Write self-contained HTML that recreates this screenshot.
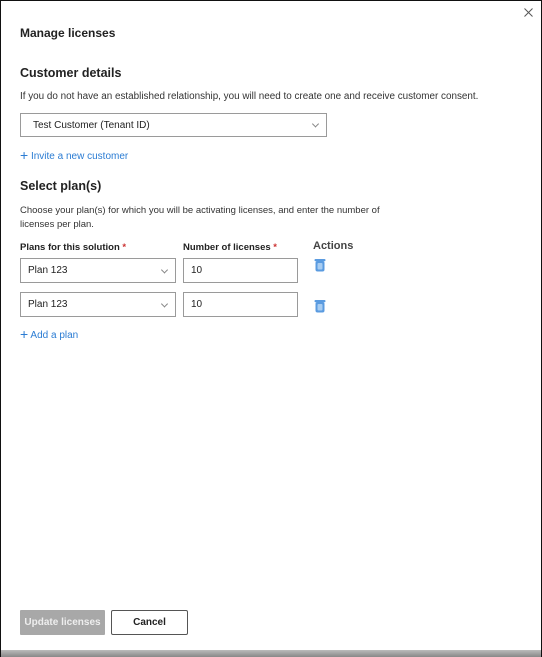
<!DOCTYPE html>
<html><head><style>
*{margin:0;padding:0;box-sizing:border-box}
body{width:542px;height:657px;background:#fff;font-family:"Liberation Sans",sans-serif;color:#222;position:relative;overflow:hidden}
.frame{position:absolute;left:0;top:0;width:542px;height:657px;border:1px solid #111;border-bottom:none}
.bar{position:absolute;left:1px;right:1px;top:650px;height:7px;background:linear-gradient(#bbb,#888)}
.a{position:absolute;white-space:nowrap}
.box{position:absolute;border:1px solid #9a9a9a;background:#fff;font-size:10px;color:#222;padding-left:7px;display:flex;align-items:center}
.chev{position:absolute;right:8px;top:50%;width:5px;height:5px;border-right:1px solid #888;border-bottom:1px solid #888;transform:translateY(-70%) rotate(45deg)}
.link{color:#2b7cd3;font-size:10px}
.req{color:#c33}
</style></head><body>
<div class="frame"></div>
<svg class="a" style="left:524px;top:8px" width="9" height="9" viewBox="0 0 9 9"><path d="M0.5 0.5L8.5 8.5M8.5 0.5L0.5 8.5" stroke="#555" stroke-width="1"/></svg>
<div class="a" style="left:20px;top:26px;font-size:12px;font-weight:bold">Manage licenses</div>
<div class="a" style="left:20px;top:66px;font-size:12.5px;font-weight:bold">Customer details</div>
<div class="a" style="left:20px;top:91px;font-size:9.9px;color:#333">If you do not have an established relationship, you will need to create one and receive customer consent.</div>
<div class="box" style="left:20px;top:113px;width:307px;height:24px;padding-left:12px">Test Customer (Tenant ID)<span class="chev"></span></div>
<div class="a link" style="left:20px;top:146px"><span style="font-size:14px;position:relative;top:1px">+</span> Invite a new customer</div>
<div class="a" style="left:20px;top:179px;font-size:12.5px;font-weight:bold">Select plan(s)</div>
<div class="a" style="left:20px;top:204px;font-size:9.5px;color:#333;line-height:14px">Choose your plan(s) for which you will be activating licenses, and enter the number of<br>licenses per plan.</div>
<div class="a" style="left:20px;top:242px;font-size:9.5px;font-weight:bold">Plans for this solution <span class="req">*</span></div>
<div class="a" style="left:183px;top:242px;font-size:9.5px;font-weight:bold">Number of licenses <span class="req">*</span></div>
<div class="a" style="left:313px;top:240px;font-size:11px;font-weight:bold;color:#444">Actions</div>
<div class="box" style="left:20px;top:258px;width:156px;height:25px">Plan 123<span class="chev"></span></div>
<div class="box" style="left:183px;top:258px;width:115px;height:25px">10</div>
<div class="box" style="left:20px;top:292px;width:156px;height:25px">Plan 123<span class="chev"></span></div>
<div class="box" style="left:183px;top:292px;width:115px;height:25px">10</div>
<svg class="a" style="left:314px;top:258px" width="12" height="14" viewBox="0 0 12 14"><rect x="0.5" y="1" width="11" height="2.2" rx="1" fill="#5a9be0"/><rect x="1.5" y="3" width="9" height="10.5" rx="2" fill="#5a9be0"/><rect x="3.5" y="5" width="5" height="6.5" rx="1" fill="#a8cdf2"/></svg>
<svg class="a" style="left:314px;top:299px" width="12" height="14" viewBox="0 0 12 14"><rect x="0.5" y="1" width="11" height="2.2" rx="1" fill="#5a9be0"/><rect x="1.5" y="3" width="9" height="10.5" rx="2" fill="#5a9be0"/><rect x="3.5" y="5" width="5" height="6.5" rx="1" fill="#a8cdf2"/></svg>
<div class="a link" style="left:20px;top:325px"><span style="font-size:14px;position:relative;top:1px">+</span> Add a plan</div>
<div class="a" style="left:20px;top:610px;width:85px;height:25px;background:#a8a8a8;color:#eee;font-size:10px;font-weight:bold;display:flex;align-items:center;justify-content:center;border-radius:1px">Update licenses</div>
<div class="a" style="left:111px;top:610px;width:77px;height:25px;border:1px solid #555;color:#222;font-size:10px;font-weight:bold;display:flex;align-items:center;justify-content:center;border-radius:2px">Cancel</div>
<div class="bar"></div>
</body></html>
